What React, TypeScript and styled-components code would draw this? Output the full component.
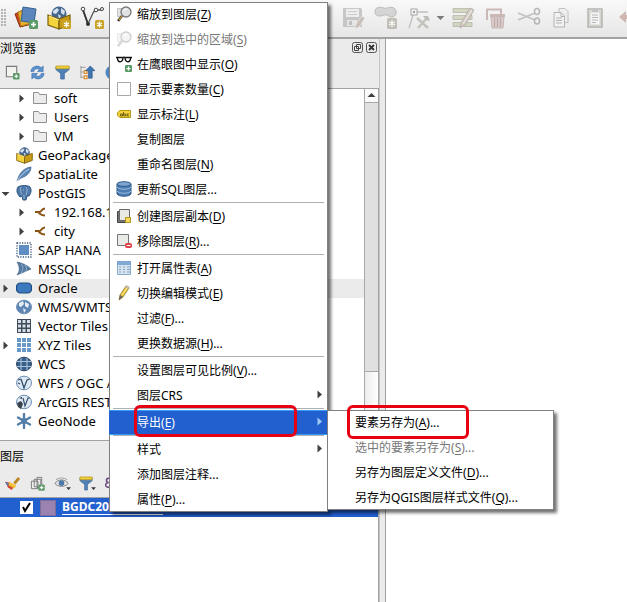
import React from "react";
import styled, { createGlobalStyle, css } from "styled-components";

const GlobalStyle = createGlobalStyle`
  * { box-sizing: border-box; }
  body { margin: 0; background: #ebebeb; }
  body, button { font-family: "Noto Sans", "Noto Sans CJK SC", sans-serif; font-size: 12px; color: #000; }
  button { margin: 0; padding: 0; border: 0; background: none; }
  svg { display: block; flex: none; }
`;

/* ---------- layout ---------- */

const Window = styled.div`
  position: relative;
  display: flex;
  flex-direction: column;
  min-height: 100vh;
  overflow: hidden;
`;

const Toolbar = styled.div`
  display: flex;
  align-items: center;
  height: 39px;
  padding: 0 0 2px;
  background: linear-gradient(#f9f9f9, #e6e6e6);
  border-bottom: 2px solid #a3a3a3;
  overflow: hidden;
`;

const Grip = styled.div`
  flex: none;
  width: 5px;
  height: 17px;
  margin: 0 3px 0 1px;
  background: radial-gradient(circle at 1px 1px, #b4b4b4 1px, transparent 1px) 0 0 / 3px 3px;
`;

const ToolButton = styled.button<{ $width?: number }>`
  display: flex;
  flex: none;
  align-items: center;
  justify-content: center;
  width: ${(p) => p.$width ?? 33}px;
  height: 28px;
`;

const EditTools = styled.div`
  display: flex;
  flex: none;
  align-items: center;
  margin-left: 228px;
  opacity: 0.75;
`;

const Workspace = styled.div`
  display: flex;
  flex: 1;
`;

const Sidebar = styled.aside`
  display: flex;
  flex: 0 0 379px;
  flex-direction: column;
`;

const Splitter = styled.div`
  flex: none;
  width: 7px;
  background: #ebebeb;
  border-left: 1px solid #c4c4c4;
  border-right: 1px solid #a0a0a0;
`;

const Canvas = styled.main`
  flex: 1;
  background: #fff;
`;

const PanelTitle = styled.h2<{ $height: number }>`
  display: flex;
  align-items: center;
  gap: 3px;
  height: ${(p) => p.$height}px;
  margin: 0;
  padding: 0 2px 1px 0;
  font-size: 12px;
  font-weight: 400;
  span { flex: 1; }
`;

const PanelTools = styled.div<{ $height: number }>`
  display: flex;
  align-items: center;
  height: ${(p) => p.$height}px;
  padding-bottom: 1px;
  svg { width: auto; height: 15px; }
`;

const TreeFrame = styled.div`
  display: flex;
  border: 1px solid #a3a3a3;
  border-left: 0;
  background: #fff;
`;

const TreeList = styled.ul`
  flex: 1;
  margin: 0;
  padding: 0 0 9px;
  list-style: none;
`;

const TreeRow = styled.li<{ $nested?: boolean; $current?: boolean }>`
  display: flex;
  align-items: center;
  height: 19px;
  padding-left: ${(p) => (p.$nested ? 16 : 0)}px;
  padding-bottom: 1px;
  background: ${(p) => (p.$current ? "#ebebeb" : "transparent")};
  font-size: 13px;
  white-space: nowrap;
`;

const Expander = styled.span`
  display: flex;
  flex: none;
  justify-content: center;
  width: 10px;
`;

const TreeIcon = styled.span`
  display: flex;
  flex: none;
  justify-content: center;
  width: 28px;
`;

const ScrollBar = styled.div`
  display: flex;
  flex-direction: column;
  width: 14px;
  border-left: 1px solid #a8a8a8;
  background: linear-gradient(90deg, #ececec, #fff);
`;

const ScrollButton = styled.button`
  display: flex;
  align-items: center;
  justify-content: center;
  height: 14px;
  border-bottom: 1px solid #a8a8a8;
  background: #fbfbfb;
`;

const ScrollThumb = styled.div`
  height: 269px;
  background: #e0e0e0;
  border-bottom: 1px solid #a8a8a8;
`;

const LayerTree = styled.div`
  flex: 1;
  border-top: 1px solid #a3a3a3;
  border-right: 1px solid #a3a3a3;
  background: #fff;
`;

const LayerRow = styled.label`
  display: flex;
  align-items: center;
  height: 19px;
  padding-left: 20px;
  background: #2360cf;
  color: #fff;
`;

const LayerName = styled.span`
  width: 101px;
  border-bottom: 1px solid #fff;
  font-size: 12px;
  font-weight: 700;
  line-height: 14px;
  white-space: nowrap;
`;

const LayerCheck = styled.input`
  appearance: none;
  width: 13px;
  height: 13px;
  margin: 0;
  background: #fff;
  &:checked {
    background: #fff url("data:image/svg+xml,%3Csvg xmlns='http://www.w3.org/2000/svg' width='13' height='13'%3E%3Cpath d='M3 6l2 4 5-8' fill='none' stroke='black' stroke-width='2'/%3E%3C/svg%3E");
  }
`;

const Swatch = styled.span`
  width: 16px;
  height: 16px;
  margin: 0 6px 0 7px;
  background: #9a83b0;
  border: 1px solid #7d6d9c;
`;

/* ---------- menus ---------- */

const MenuBox = styled.div<{ $sub?: boolean }>`
  position: absolute;
  ${(p) =>
    p.$sub
      ? css`left: 327px; top: 410px; width: 227px;`
      : css`left: 109px; top: 2px; width: 219px;`}
  background: #fff;
  box-shadow: inset 0 0 0 1px #808080, 3px 3px 3px rgba(0, 0, 0, 0.55);
`;

const MenuItem = styled.button<{ $active?: boolean }>`
  position: relative;
  display: flex;
  align-items: center;
  width: 100%;
  height: 25px;
  padding: 0 4px 2px 0;
  text-align: left;
  white-space: nowrap;
  &:disabled { color: #777; }
  ${(p) =>
    p.$active &&
    css`
      background: #2360cf;
      color: #fff;
      border: 1px solid #3399f5;
      border-width: 1px 0;
    `}
`;

const MenuIcon = styled.span`
  display: flex;
  flex: none;
  align-items: center;
  justify-content: center;
  width: 28px;
  padding-left: 2px;
`;

const MenuLabel = styled.span`
  flex: 1;
  u { text-underline-offset: 2px; }
`;

const Separator = styled.hr`
  height: 2px;
  margin: 0 4px;
  border: 0;
  border-top: 1px solid #b0b0b0;
  background: #fff;
`;

const Highlight = styled.span<{ $sub?: boolean }>`
  position: absolute;
  z-index: 2;
  ${(p) =>
    p.$sub
      ? css`left: 20px; top: -5px; width: 122px; height: 34px;`
      : css`left: 25px; top: -6px; width: 163px; height: 32px;`}
  border: 3px solid #e60012;
  border-radius: 6px;
  pointer-events: none;
`;

/* ---------- icons ---------- */

type G = { w?: number; h?: number; children: React.ReactNode };
const Svg = ({ w = 16, h = w, children }: G) => (
  <svg width={w} height={h} viewBox={`0 0 ${w} ${h}`} fill="none" aria-hidden="true">
    {children}
  </svg>
);

const Arrow = ({ dir, color = "#404040" }: { dir: "right" | "down" | "up"; color?: string }) => (
  <Svg w={9}>
    <path
      fill={color}
      d={dir === "right" ? "M2.500 0.500L7 4.500L2.500 8.500Z" : dir === "down" ? "M0.500 3H8.500L4.500 7Z" : "M0.500 6H8.500L4.500 2Z"}
    />
  </Svg>
);

const Plus = ({ x, y }: { x: number; y: number }) => (
  <g transform={`translate(${x} ${y})`}>
    <rect width="9" height="9" rx="1.500" fill="#5d9a67" />
    <path d="M4.500 2v5M2 4.500h5" stroke="#fff" strokeWidth="1.600" />
  </g>
);

const Spark = ({ x, y }: { x: number; y: number }) => (
  <g transform={`translate(${x} ${y})`}>
    <rect width="9" height="9" rx="1.500" fill="#c9a227" />
    <path d="M4.500 1.500v6M2 3l5 3M7 3L2 6" stroke="#fff" strokeWidth="1.200" />
  </g>
);

const AddLayers = () => (
  <Svg w={24}>
    <path d="M1 8l8-4 9 14-12 3z" fill="#c8441b" stroke="#8f2e12" />
    <path d="M4 6l11-3 3 14-11 3z" fill="#e9b32c" stroke="#b1821a" />
    <path d="M9 1l13 2-2 14-13-2z" fill="#5b86bd" stroke="#39628f" />
    <Plus x={15} y={14} />
  </Svg>
);

const PackageShape = () => (
  <>
    <circle cx="12" cy="8" r="7.500" fill="#45678f" />
    <path d="M6 5l4-3 2 2-3 4-3-1zM14 2l4 3-1 4-3-2zM11 8l3 2-2 3z" fill="#d5e2ee" />
    <path d="M1 9l11 4v10L1 19z" fill="#f4d33c" stroke="#7a5f0c" strokeWidth="1.200" />
    <path d="M12 13l11-4v10l-11 4z" fill="#c99a16" stroke="#7a5f0c" strokeWidth="1.200" />
    <path d="M2 10l10 4" stroke="#fff0a0" />
  </>
);

const NewPackage = () => (
  <Svg w={24}>
    <PackageShape />
    <Spark x={15} y={14} />
  </Svg>
);

const PackageSmall = () => (
  <svg width="17" height="17" viewBox="0 0 24 24" fill="none" aria-hidden="true">
    <PackageShape />
  </svg>
);

const NewVector = () => (
  <Svg w={24}>
    <path d="M3 4l5 14 5-11c1-2 2-3 4-3h5" stroke="#555" strokeWidth="1.300" />
    <path d="M3 4l5 14" stroke="#333" strokeWidth="1.800" />
    <g fill="#fff" stroke="#444">
      <circle cx="3" cy="3" r="1.800" />
      <circle cx="16" cy="4" r="1.800" />
      <circle cx="22" cy="3" r="1.500" />
    </g>
    <circle cx="8" cy="18" r="2" fill="#333" />
    <Spark x={15} y={14} />
  </Svg>
);

const SaveEdits = () => (
  <Svg w={24}>
    <path d="M2 2h18l1 2v17H2z" fill="#b9b9b9" />
    <path d="M5 3h13v8H5z" fill="#ececec" />
    <path d="M7 5.500h9M7 8.500h9" stroke="#c2c2c2" />
    <path d="M6 14h10v6H6z" fill="#e4e4e4" />
    <path d="M8 15h3v4H8z" fill="#b0b0b0" />
    <path d="M14 23l1-5 6-8 3 2-6 9z" fill="#bdb1aa" stroke="#eee" strokeWidth=".7" />
  </Svg>
);

const AddPolygon = () => (
  <Svg w={24}>
    <path d="M1 6c0-6 6-5 9-4s6-2 10 0c4 3 2 9-2 9s-4-3-8-2c-5 2-9 1-9-3z" fill="#cbcbcb" stroke="#a8a8a8" />
    <rect x="13" y="12" width="10" height="11" rx="1.500" fill="#b3b0a5" />
    <path d="M18 14v7M15 16l6 3M21 16l-6 3" stroke="#fff" strokeWidth="1.300" />
  </Svg>
);

const VertexTool = () => (
  <Svg w={24}>
    <path d="M2 22L7 6h14" stroke="#b0b0b0" strokeWidth="1.300" />
    <rect x="4" y="3" width="6" height="6" fill="#f2f2f2" stroke="#909090" />
    <path d="M6 5h2v2H6z" fill="#888" />
    <path d="M10 12l11 10M20 12l-9 10" stroke="#b5b5ae" strokeWidth="2.400" />
    <path d="M16 10l5 0 2 5-4-1z" fill="#aeaca5" />
  </Svg>
);

const EditRows = () => (
  <Svg w={24}>
    <g fill="#cacdb5" stroke="#adb198">
      <path d="M2 2.500h19v4H2zM2 9.500h19v4H2zM2 16.500h19v4H2z" />
    </g>
    <path d="M9 22l1-5L19 2l4 2-9 15z" fill="#cbc1b7" stroke="#a79e98" />
    <path d="M12 18L21 4" stroke="#eeeae6" />
  </Svg>
);

const Trash = () => (
  <Svg w={24}>
    <path d="M3 14V3.500h14V8" stroke="#bfa5a2" strokeWidth="2" />
    <path d="M6 8h15v3H6z" fill="#bfa5a2" />
    <path d="M7 11h13l-1 11H8z" fill="#d4c5c3" stroke="#b9a19e" />
    <path d="M10.500 12v9M13.500 12v9M16.500 12v9" stroke="#b0948f" strokeWidth="1.300" />
  </Svg>
);

const Scissors = () => (
  <Svg w={24}>
    <path d="M1 7l17 7M1 14l17-7" stroke="#b3b3b3" strokeWidth="1.800" />
    <ellipse cx="20" cy="5.500" rx="2.500" ry="3" stroke="#a4a4a4" strokeWidth="1.500" />
    <ellipse cx="20" cy="15" rx="2.500" ry="3" stroke="#a4a4a4" strokeWidth="1.500" />
  </Svg>
);

const CopyIcon = () => (
  <Svg w={22}>
    <path d="M8 1.500h6l3 3v11H8z" fill="#eee" stroke="#b0b0b0" />
    <path d="M3 5.500h7l3.500 3.500v11H3z" fill="#f4f4f4" stroke="#a0a0a0" />
    <path d="M10 5.500v4h3.500M5 11h6M5 13.500h6M5 16h6" stroke="#a0a0a0" />
  </Svg>
);

const PasteIcon = () => (
  <Svg w={22}>
    <path d="M4 2h14v18H4z" fill="#d8d8d2" stroke="#a2a19a" strokeWidth="1.500" />
    <path d="M6 5h10v13H6z" fill="#f7f7f7" stroke="#b5b5b5" strokeWidth=".7" />
    <path d="M8 1h6v4H8z" fill="#b5b5b5" />
    <path d="M8 8h6M8 10.500h6M8 13h6M8 15.500h4" stroke="#a5a5a5" />
  </Svg>
);

const UndoIcon = () => (
  <Svg w={20}>
    <path d="M1 9l7-6v4h6c4 0 5 4 5 8-2-3-4-4-7-4H8v4z" fill="#c4a59d" />
  </Svg>
);

const AddSelected = () => (
  <Svg w={16}>
    <path d="M1.500 1.500h11v11h-11z" fill="#f2f2ee" stroke="#7b7b7b" strokeWidth="1.200" />
    <g transform="translate(8.500 8.500) scale(.78)"><Plus x={0} y={0} /></g>
  </Svg>
);

const Refresh = () => (
  <Svg w={16}>
    <path d="M1 7C1 2 8-1 12 3l2-2v6H8l2-2C7 3 5 4 4 7z" fill="#5c92cd" stroke="#3d71ad" strokeWidth=".7" />
    <path d="M15 9c0 5-7 8-11 4l-2 2V9h6l-2 2c3 2 5 1 6-2z" fill="#5c92cd" stroke="#3d71ad" strokeWidth=".7" />
  </Svg>
);

const Funnel = () => (
  <Svg w={16}>
    <path d="M1 2h14v3L10 9v6H6V9L1 5z" fill="#4f81b8" stroke="#3c689b" strokeWidth=".7" />
    <path d="M1 1h14v3H1z" fill="#f0cf38" stroke="#b39319" strokeWidth=".7" />
  </Svg>
);

const Collapse = () => (
  <Svg w={16}>
    <path d="M1 1v13M1 2.500h5M1 7.500h3M1 13h3" stroke="#999" />
    <path d="M4.500 6h3v3h-3zM4.500 11.500h3v3h-3z" fill="#fff" stroke="#e08a2e" strokeWidth="1.300" />
    <path d="M11 1l5 5h-3v8H9V6H6z" fill="#3f75b1" stroke="#2c578b" strokeWidth=".7" />
  </Svg>
);

const InfoIcon = () => (
  <Svg w={16}>
    <circle cx="8" cy="8" r="7.500" fill="#4f86c0" />
    <path d="M8 7v5M8 3.500v2" stroke="#fff" strokeWidth="2" />
  </Svg>
);

const Folder = () => (
  <Svg w={16}>
    <path d="M1.500 2.500h5l1 2h7v9h-13z" fill="#ececec" stroke="#8f8f8f" />
  </Svg>
);

const Feather = () => (
  <Svg w={16}>
    <path d="M1 15C3 8 7 2 15 1c0 4-3 9-10 11z" fill="#5c88b8" stroke="#375f8c" strokeWidth=".7" />
    <path d="M1 15C4 10 8 6 13 3" stroke="#d7e5f2" strokeWidth=".8" />
  </Svg>
);

const Elephant = () => (
  <Svg w={16}>
    <path d="M2 2c3-2 10-2 12 0 2 3 1 6-1 9h-2l-1 4H7l-1-4-2 1C1 9 0 5 2 2z" fill="#4d78a8" stroke="#2e5680" />
    <path d="M5 2c-1 3 0 6 1 8M10 2c2 3 1 5 0 8M7 5h1M8 10v4" stroke="#9fbcd8" strokeWidth=".9" />
  </Svg>
);

const Connection = () => (
  <Svg w={12}>
    <path d="M1 6h4.500M11 2.500C7 2.500 8 6 5.500 6S7 9.500 11 9.500" stroke="#8a5313" strokeWidth="2" />
  </Svg>
);

const Hana = () => (
  <Svg w={16}>
    <path d="M3 3h10v10H3z" fill="#5e8ec3" />
    <rect x="1" y="1" width="14" height="14" stroke="#36597f" strokeWidth="1.300" strokeDasharray="1.200 1.300" />
  </Svg>
);

const Mssql = () => (
  <Svg w={16}>
    <path d="M1 1c5 1 10 3 14 7L1 14c3-4 3-8 0-13z" fill="#54799f" stroke="#45698f" strokeWidth=".7" />
    <path d="M5 3c3 3 2 6 0 9M9 4c2 2 2 5 0 7" stroke="#a9c2db" strokeWidth=".8" />
  </Svg>
);

const Oracle = () => (
  <Svg w={16} h={12}>
    <rect x=".5" y="1" width="15" height="10" rx="4" fill="#3c78bd" stroke="#1f4c80" strokeWidth="1.200" />
  </Svg>
);

const Globe = ({ kind }: { kind: "wms" | "wcs" | "wfs" | "arc" }) => (
  <Svg w={16}>
    <ellipse cx="8" cy="8" rx="7.500" ry="6.800" fill={kind === "wcs" ? "#3b5f88" : kind === "wms" ? "#5d86b5" : "#dfe9f3"} stroke={kind === "wcs" ? "#2b4868" : "#6d90b5"} />
    {kind === "wcs" && <path d="M1 5.500h14M1 10.500h14M5 2v12M11 2v12" stroke="#a9c5e0" strokeWidth="1.100" />}
    {kind === "wms" && <path d="M3 4l4-2 1 3-3 3-2-1zM9 3l4 2-1 4-3-2zM7 9l3 2-2 3z" fill="#e8f0f7" />}
    {kind === "wfs" && <path d="M5 4l3 9 3-8 3-1M2 8l2 1M2 5l3-1" stroke="#34516f" strokeWidth="1.300" />}
    {kind === "arc" && (
      <>
        <path d="M7 4l2 8 3-8h2" stroke="#34516f" strokeWidth="1.200" />
        <path d="M1 9l4-2 2 3-2 5-3-2zM3 4l3-1 0 2z" fill="#39434e" />
      </>
    )}
  </Svg>
);

const GridIcon = ({ light }: { light?: boolean }) => (
  <Svg w={16}>
    {!light && <path d="M1 1h14v14H1z" fill="#3d4b59" />}
    {[0, 1, 2].map((r) =>
      [0, 1, 2].map((c) => (
        <rect key={`${r}${c}`} x={(light ? 1 : 2) + c * (light ? 5 : 4.500)} y={(light ? 1 : 2) + r * (light ? 5 : 4.500)} width={light ? 4 : 3} height={light ? 4 : 3} fill={light ? "#6798c9" : "#d8dfe6"} />
      ))
    )}
  </Svg>
);

const GeoNode = () => (
  <Svg w={16}>
    <path d="M8 1v14M2 4.500l12 7M14 4.500l-12 7" stroke="#527ea9" strokeWidth="2.400" strokeLinecap="round" />
    <circle cx="8" cy="8" r="3" fill="#527ea9" />
  </Svg>
);

const Brush = () => (
  <Svg w={16}>
    <path d="M15 2L10 8" stroke="#b98524" strokeWidth="3" />
    <path d="M0 6l5 1 6 3-4 5-4-3z" fill="#d4483a" />
    <path d="M4 6l8 4-2 3-6-3z" fill="#f0c135" />
    <path d="M0 6l4 2-1 3z" fill="#4e83c1" />
  </Svg>
);

const AddGroup = () => (
  <Svg w={16}>
    <path d="M1.500 5.500h7v8h-7zM4.500 3.500h7v8h-7zM7.500 1.500h5v11h-5z" stroke="#777" fill="#f0f0f0" fillOpacity=".6" />
    <g transform="translate(9 9) scale(.75)"><Plus x={0} y={0} /></g>
  </Svg>
);

const Eye = () => (
  <Svg w={18} h={16}>
    <path d="M1 8c3-5 11-5 14 0-3 4-11 4-14 0z" fill="#e8e8e8" stroke="#777" />
    <circle cx="8" cy="7.500" r="3" fill="#4a78a8" />
    <path d="M2 4c3-2 8-3 12 0" stroke="#999" />
    <path d="M13 12h5l-2.500 3z" fill="#333" />
  </Svg>
);

const FunnelMenu = () => (
  <Svg w={18} h={16}>
    <path d="M1 2h13v3L9 9v6H6V9L1 5z" fill="#4f81b8" stroke="#3c689b" strokeWidth=".7" />
    <path d="M1 1h13v3H1z" fill="#f0cf38" stroke="#b39319" strokeWidth=".7" />
    <path d="M13 12h5l-2.500 3z" fill="#333" />
  </Svg>
);

const Expression = () => (
  <Svg w={16}>
    <path d="M5 2C0 2 1 7 4 7-1 7 0 13 5 12M8 4l6 8M14 4l-6 8" stroke="#6b4b80" strokeWidth="1.600" />
  </Svg>
);

const ZoomTo = ({ dim }: { dim?: boolean }) => (
  <Svg w={16}>
    <g opacity={dim ? 0.35 : 1}>
      <path d="M1.500 2.500h8v8h-8z" fill="#e4e4e4" stroke="#c4c4c4" />
      <path d="M6 10l-4 5" stroke={dim ? "#777" : "#3d3d3d"} strokeWidth="2.600" />
      <path d="M6 10l-3 4" stroke={dim ? "#aaa" : "#e2a52c"} strokeWidth="1.200" />
      <circle cx="10" cy="6" r="5" fill="#dfe1e3" stroke="#777" strokeWidth="1.300" />
      <path d="M7 5c1-2 3-2 4-2" stroke="#fff" />
    </g>
  </Svg>
);

const Glasses = () => (
  <Svg w={16}>
    <path d="M0 1.500h6M10 1.500h6" stroke="#111" strokeWidth="1.600" />
    <path d="M1.500 2c0 5 5 5 5.500 0M9 2c.5 5 5.500 5 5.500 0" stroke="#111" strokeWidth="1.400" />
    <path d="M6 2c1-1 3-1 4 0" stroke="#111" strokeWidth="1.300" />
    <g transform="translate(9 9) scale(.78)"><Plus x={0} y={0} /></g>
  </Svg>
);

const EmptyBox = () => (
  <Svg w={14}>
    <path d="M.5.5h13v13H.5z" fill="#fff" stroke="#a9a9a9" />
  </Svg>
);

const TagIcon = () => (
  <Svg w={14} h={8}>
    <path d="M3 .5h10.500v7H3L.5 5.500v-3z" fill="#f2d43a" stroke="#b69717" />
    <path d="M3.500 4h2v2h-2zM6.500 2v4M7 4h1.500v2H7M12 4h-2v2h2" stroke="#57480c" strokeWidth=".8" />
  </Svg>
);

const Database = () => (
  <Svg w={16}>
    <path d="M1 3v10c2 3 12 3 14 0V3z" fill="#4c7cb3" stroke="#2f5a8c" />
    <path d="M1 6c2 3 12 3 14 0M1 10c2 3 12 3 14 0" stroke="#9dbcdb" />
    <ellipse cx="8" cy="3" rx="7" ry="2.300" fill="#7fa6cf" stroke="#2f5a8c" />
  </Svg>
);

const Duplicate = () => (
  <Svg w={16}>
    <path d="M1.500 3.500h9v11h-9z" fill="#777" stroke="#444" />
    <path d="M3.500 1.500h10v11h-10z" fill="#e9e9e4" stroke="#666" />
    <path d="M9.500 9.500h5v5h-5z" fill="#f2d858" stroke="#b8921d" />
  </Svg>
);

const RemoveLayer = () => (
  <Svg w={16}>
    <path d="M1.500 1.500h11v11h-11z" fill="#e9ebe6" stroke="#777" />
    <rect x="9" y="10" width="7" height="5" rx="2" fill="#dd3a43" />
    <path d="M10.500 12.500h4" stroke="#fff" strokeWidth="1.200" />
  </Svg>
);

const TableIcon = () => (
  <Svg w={16}>
    <path d="M1.500 1.500h13v13h-13z" fill="#d7e5f3" stroke="#88a9cb" />
    <path d="M1 1h14v4H1z" fill="#7fa8d3" />
    <path d="M3 7h2M7 7h2M11 7h3M3 9.500h2M7 9.500h2M11 9.500h3M3 12h2M7 12h2M11 12h3" stroke="#8aa4bf" strokeWidth="1.200" />
  </Svg>
);

const Pencil = () => (
  <Svg w={16}>
    <path d="M3 15l1-5 6-9 3 2-6 9z" fill="#e7c63c" stroke="#94792a" strokeWidth=".8" />
    <path d="M3 15l1-5 3 2z" fill="#666" />
    <path d="M6 10l5-7" stroke="#fff0a0" />
    <path d="M9 2l1-2 4 2-2 2z" fill="#c7b9a8" />
  </Svg>
);

const FloatIcon = () => (
  <Svg w={11}>
    <rect x=".5" y=".5" width="10" height="10" rx="2" stroke="#555" />
    <path d="M4.500 2.500h4v4h-4zM2.500 4.500h4v4h-4z" stroke="#444" fill="#ebebeb" />
  </Svg>
);

const CloseIcon = () => (
  <Svg w={11}>
    <rect x=".5" y=".5" width="10" height="10" rx="2" stroke="#555" />
    <path d="M3 3l5 5M8 3L3 8" stroke="#333" strokeWidth="1.800" />
  </Svg>
);

/* ---------- data ---------- */

type Node = { text: string; icon: React.ReactNode; nested?: boolean; arrow?: "right" | "down"; current?: boolean };

const nodes: Node[] = [
  { text: "soft", icon: <Folder />, nested: true, arrow: "right" },
  { text: "Users", icon: <Folder />, nested: true, arrow: "right" },
  { text: "VM", icon: <Folder />, nested: true, arrow: "right" },
  { text: "GeoPackage", icon: <PackageSmall /> },
  { text: "SpatiaLite", icon: <Feather /> },
  { text: "PostGIS", icon: <Elephant />, arrow: "down" },
  { text: "192.168.1", icon: <Connection />, nested: true, arrow: "right" },
  { text: "city", icon: <Connection />, nested: true, arrow: "right" },
  { text: "SAP HANA", icon: <Hana /> },
  { text: "MSSQL", icon: <Mssql /> },
  { text: "Oracle", icon: <Oracle />, arrow: "right", current: true },
  { text: "WMS/WMTS", icon: <Globe kind="wms" /> },
  { text: "Vector Tiles", icon: <GridIcon /> },
  { text: "XYZ Tiles", icon: <GridIcon light />, arrow: "right" },
  { text: "WCS", icon: <Globe kind="wcs" /> },
  { text: "WFS / OGC A", icon: <Globe kind="wfs" /> },
  { text: "ArcGIS REST", icon: <Globe kind="arc" /> },
  { text: "GeoNode", icon: <GeoNode /> },
];

type Entry =
  | "-"
  | { text: string; mnemonic?: string; tail?: string; icon?: React.ReactNode; disabled?: boolean; submenu?: boolean; active?: boolean; marked?: boolean };

const layerMenu: Entry[] = [
  { text: "缩放到图层", mnemonic: "Z", icon: <ZoomTo /> },
  { text: "缩放到选中的区域", mnemonic: "S", icon: <ZoomTo dim />, disabled: true },
  { text: "在鹰眼图中显示", mnemonic: "O", icon: <Glasses /> },
  { text: "显示要素数量", mnemonic: "C", icon: <EmptyBox /> },
  { text: "显示标注", mnemonic: "L", icon: <TagIcon /> },
  { text: "复制图层" },
  { text: "重命名图层", mnemonic: "N" },
  { text: "更新SQL图层...", icon: <Database /> },
  "-",
  { text: "创建图层副本", mnemonic: "D", icon: <Duplicate /> },
  { text: "移除图层", mnemonic: "R", tail: "...", icon: <RemoveLayer /> },
  "-",
  { text: "打开属性表", mnemonic: "A", icon: <TableIcon /> },
  { text: "切换编辑模式", mnemonic: "E", icon: <Pencil /> },
  { text: "过滤", mnemonic: "F", tail: "..." },
  { text: "更换数据源", mnemonic: "H", tail: "..." },
  "-",
  { text: "设置图层可见比例", mnemonic: "V", tail: "..." },
  { text: "图层CRS", submenu: true },
  "-",
  { text: "导出", mnemonic: "E", submenu: true, active: true, marked: true },
  "-",
  { text: "样式", submenu: true },
  { text: "添加图层注释..." },
  { text: "属性", mnemonic: "P", tail: "..." },
];

const exportMenu: Entry[] = [
  { text: "要素另存为", mnemonic: "A", tail: "...", marked: true },
  { text: "选中的要素另存为", mnemonic: "S", tail: "...", disabled: true },
  { text: "另存为图层定义文件", mnemonic: "D", tail: "..." },
  { text: "另存为QGIS图层样式文件", mnemonic: "Q", tail: "..." },
];

const Menu = ({ entries, sub, label }: { entries: Entry[]; sub?: boolean; label: string }) => (
  <MenuBox $sub={sub} role="menu" aria-label={label}>
    {entries.map((e, i) =>
      e === "-" ? (
        <Separator key={i} />
      ) : (
        <MenuItem key={i} role="menuitem" disabled={e.disabled} $active={e.active}>
          <MenuIcon>{e.icon}</MenuIcon>
          <MenuLabel>
            {e.text}
            {e.mnemonic && <>(<u>{e.mnemonic}</u>)</>}
            {e.tail}
          </MenuLabel>
          {e.submenu && <Arrow dir="right" color={e.active ? "#9fc8f5" : "#404040"} />}
          {e.marked && <Highlight $sub={sub} />}
        </MenuItem>
      )
    )}
  </MenuBox>
);

const Tools = ({ items, width }: { items: [string, React.ReactNode][]; width?: number }) => (
  <>
    {items.map(([name, icon]) => (
      <ToolButton key={name} $width={width} aria-label={name}>
        {icon}
      </ToolButton>
    ))}
  </>
);

export default function App() {
  return (
    <>
      <GlobalStyle />
      <Window>
        <Toolbar>
          <Grip />
          <Tools items={[["添加图层", <AddLayers />], ["新建 GeoPackage", <NewPackage />], ["新建矢量图层", <NewVector />]]} />
          <EditTools>
            <Tools items={[["保存编辑", <SaveEdits />], ["添加多边形", <AddPolygon />], ["顶点工具", <VertexTool />]]} />
            <ToolButton $width={11} aria-label="顶点工具选项">
              <Arrow dir="down" color="#555" />
            </ToolButton>
            <Tools
              items={[
                ["修改属性", <EditRows />],
                ["删除", <Trash />],
                ["剪切", <Scissors />],
                ["复制", <CopyIcon />],
                ["粘贴", <PasteIcon />],
                ["撤销", <UndoIcon />],
              ]}
            />
          </EditTools>
        </Toolbar>
        <Workspace>
          <Sidebar>
            <PanelTitle $height={18}>
              <span>浏览器</span>
              <ToolButton $width={11} aria-label="浮动"><FloatIcon /></ToolButton>
              <ToolButton $width={11} aria-label="关闭"><CloseIcon /></ToolButton>
            </PanelTitle>
            <PanelTools $height={31}>
              <Tools
                width={25}
                items={[
                  ["添加选中图层", <AddSelected />],
                  ["刷新", <Refresh />],
                  ["过滤浏览器", <Funnel />],
                  ["全部折叠", <Collapse />],
                  ["属性", <InfoIcon />],
                ]}
              />
            </PanelTools>
            <TreeFrame>
              <TreeList>
                {nodes.map((n) => (
                  <TreeRow key={n.text} $nested={n.nested} $current={n.current}>
                    <Expander>{n.arrow && <Arrow dir={n.arrow} />}</Expander>
                    <TreeIcon>{n.icon}</TreeIcon>
                    {n.text}
                  </TreeRow>
                ))}
              </TreeList>
              <ScrollBar>
                <ScrollButton aria-label="向上滚动"><Arrow dir="up" /></ScrollButton>
                <ScrollThumb />
              </ScrollBar>
            </TreeFrame>
            <PanelTitle $height={30}><span>图层</span></PanelTitle>
            <PanelTools $height={26}>
              <Tools
                width={25}
                items={[
                  ["图层样式", <Brush />],
                  ["添加组", <AddGroup />],
                  ["可见性", <Eye />],
                  ["过滤图例", <FunnelMenu />],
                  ["表达式过滤", <Expression />],
                ]}
              />
            </PanelTools>
            <LayerTree>
              <LayerRow>
                <LayerCheck type="checkbox" defaultChecked />
                <Swatch />
                <LayerName>BGDC20</LayerName>
              </LayerRow>
            </LayerTree>
          </Sidebar>
          <Splitter />
          <Canvas />
        </Workspace>
        <Menu entries={layerMenu} label="图层菜单" />
        <Menu entries={exportMenu} sub label="导出" />
      </Window>
    </>
  );
}
